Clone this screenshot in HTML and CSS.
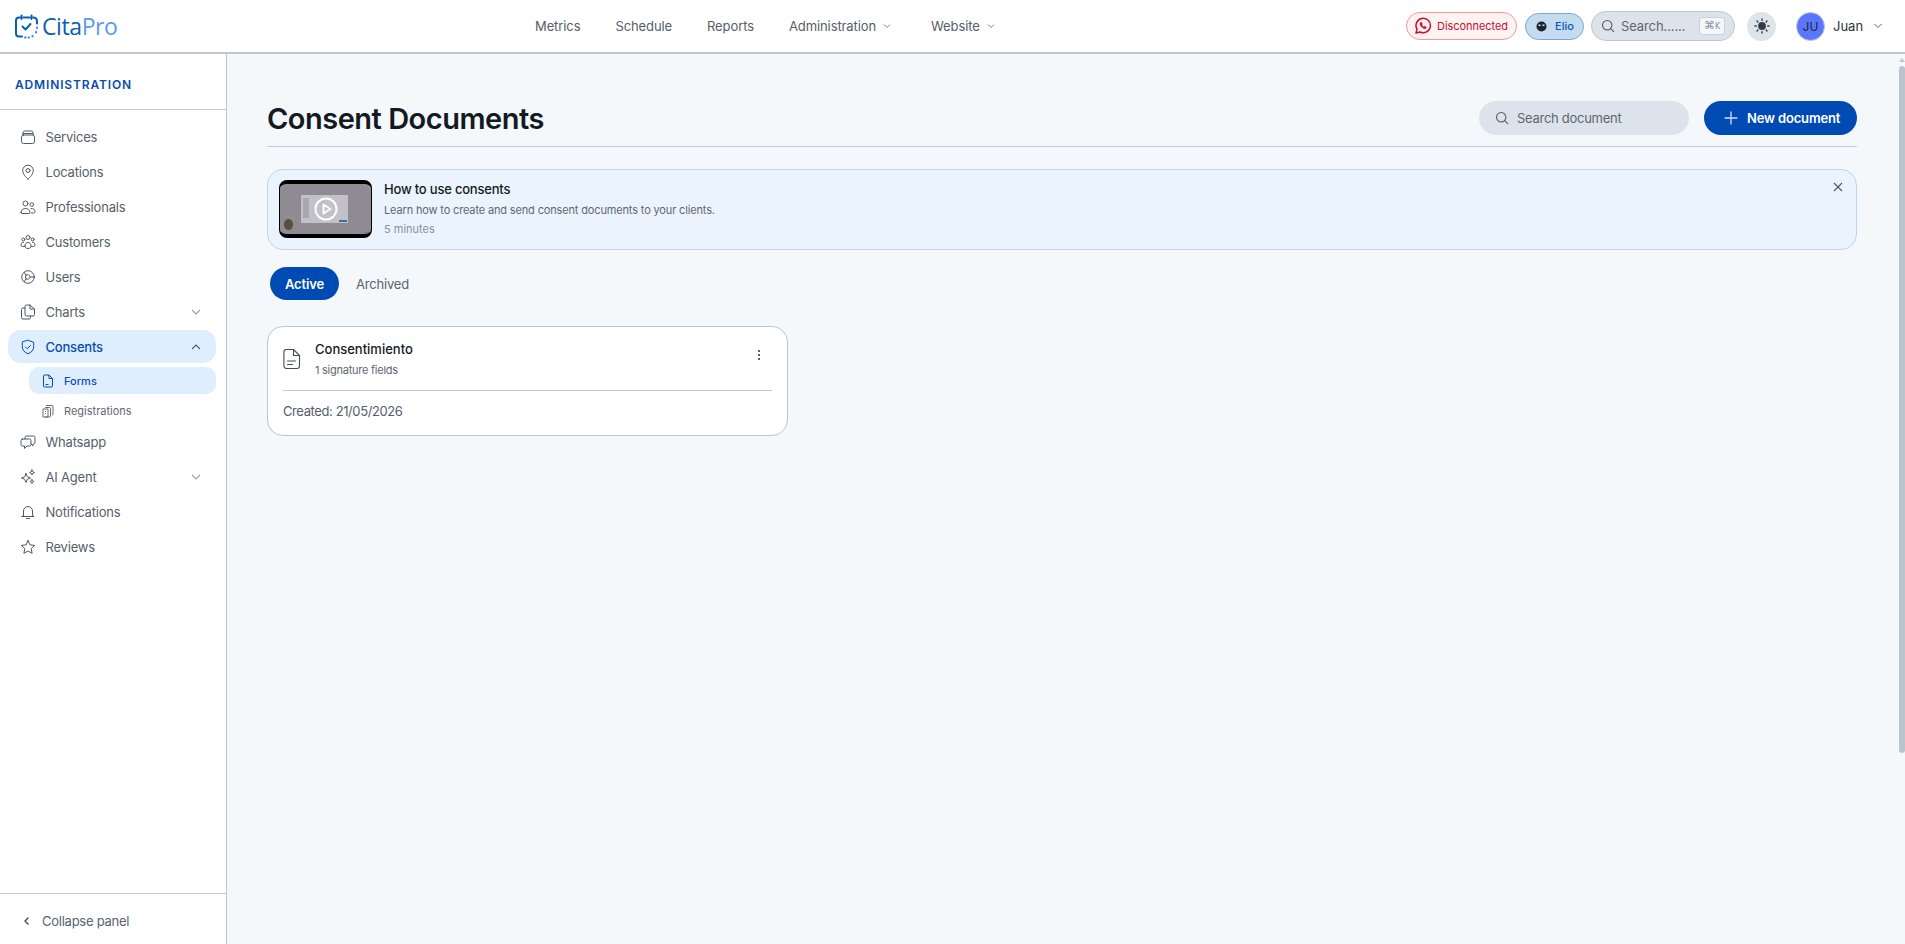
FILE: index.html
```html
<!DOCTYPE html>
<html>
<head>
    <meta charset="UTF-8">
    <title>Consent Documents</title>
    <link rel="stylesheet" href="styles.css">
</head>
<body>
    <header class="topbar">
        <a class="logo">
            <svg width="23" height="25" viewBox="0 0 23 25" fill="none" stroke="#0a5fb4" stroke-width="2" stroke-linecap="round" stroke-linejoin="round">
                <path d="M5 3.500H4a3 3 0 0 0-3 3v13a3 3 0 0 0 3 3h3"/>
                <path d="M6.500 1.500v3.500M16.500 1.500v3.500M8.500 3.500h6M18.500 3.500a3.500 3.500 0 0 1 3.500 3.500v2.500"/>
                <path d="M7.500 12.500l3 3 5-5.500"/>
                <path d="M22 13.500v.5M21 18v.5M17.500 22v.5M13.500 23.500h.5M10 23.500h.5" stroke="#2f86e6"/>
            </svg>
            <span class="logo-text">Cita<span class="logo-pro">Pro</span></span>
        </a>
        <nav class="topnav">
            <a>Metrics</a>
            <a>Schedule</a>
            <a>Reports</a>
            <a>Administration <svg class="chev-sm" viewBox="0 0 10 10"><path d="M2 3.500l3 3 3-3"/></svg></a>
            <a class="topnav-last">Website <svg class="chev-sm" viewBox="0 0 10 10"><path d="M2 3.500l3 3 3-3"/></svg></a>
        </nav>
        <div class="topright">
            <div class="pill-disconnected">
                <svg width="18" height="18" viewBox="0 0 18 18" fill="none" stroke="#c8102e" stroke-width="1.500" stroke-linejoin="round" stroke-linecap="round">
                    <path d="M2 16l1-3.800A7.200 7.200 0 1 1 6 15z"/>
                    <path d="M6.500 5.500c-.8.800-.8 2 .4 3.600s2.800 2.700 4.100 2.500c.9-.2 1.300-.8 1.300-1.400l-1.700-1-.8.700c-.9-.4-1.600-1.200-2-2l.6-.8-.9-1.700z" fill="#c8102e" stroke-width=".6"/>
                </svg>
                Disconnected
            </div>
            <div class="pill-agent">
                <svg width="11" height="11" viewBox="0 0 11 11"><circle cx="5.500" cy="5.500" r="5" fill="#1b2530"/><rect x="2.500" y="3.500" width="2" height="1.500" fill="#dfe6ec"/><rect x="6.500" y="3.500" width="2" height="1.500" fill="#dfe6ec"/></svg>
                <span>Elio</span>
            </div>
            <div class="top-search">
                <svg class="search-ico" width="14" height="14" viewBox="0 0 14 14"><circle cx="6.200" cy="6.200" r="4.700"/><path d="M9.700 9.700l3 3"/></svg>
                <span class="top-search-text">Search......</span>
                <kbd>⌘<span class="kbd-k">K</span></kbd>
            </div>
            <div class="theme-btn">
                <svg width="16" height="16" viewBox="0 0 16 16" fill="#333c47" stroke="#333c47" stroke-width="1.400" stroke-linecap="round"><circle cx="8" cy="8" r="3.200"/><path d="M8 1v1.200M8 13.800V15M1 8h1.200M13.800 8H15M3 3l.9.900M12.100 12.100l.9.900M3 13l.9-.900M12.100 3.900l.9-.900"/></svg>
            </div>
            <div class="user">
                <span class="avatar">JU</span>
                <span class="user-name">Juan</span>
                <svg class="chev-user" viewBox="0 0 10 10"><path d="M1.500 3l3.500 3.500L8.500 3"/></svg>
            </div>
        </div>
    </header>

    <div class="app">
        <aside class="sidebar">
            <div class="side-title">ADMINISTRATION</div>
            <ul class="side-list">
                <li class="side-item">
                    <svg class="ico" viewBox="0 0 16 16"><rect x="1.500" y="6" width="13" height="8.500" rx="2"/><path d="M3 6V3.500a1.500 1.500 0 0 1 1.500-1.500h7A1.500 1.500 0 0 1 13 3.500V6M3 4.500h10"/></svg>
                    Services
                </li>
                <li class="side-item">
                    <svg class="ico" viewBox="0 0 16 16"><path d="M8 15s5.300-3.800 5.300-8.500A5.300 5.300 0 0 0 2.700 6.500C2.700 11.200 8 15 8 15z"/><circle cx="8" cy="6.500" r="2"/></svg>
                    Locations
                </li>
                <li class="side-item">
                    <svg class="ico" viewBox="0 0 16 16"><circle cx="5.500" cy="4.500" r="2.500"/><circle cx="11.800" cy="5.500" r="1.800"/><path d="M1 13.500c0-2.500 2-4 4.500-4s4.500 1.500 4.500 4c0 .5-.3 1-1 1H2c-.7 0-1-.5-1-1z"/><path d="M11 9.500c2.300-.3 4 .9 4 3 0 1-.5 1.500-1.200 1.500H11.500"/></svg>
                    Professionals
                </li>
                <li class="side-item">
                    <svg class="ico" viewBox="0 0 16 16"><circle cx="8" cy="3.500" r="2"/><circle cx="3.300" cy="5.500" r="1.500"/><circle cx="12.700" cy="5.500" r="1.500"/><path d="M5 12c0-2.300 1.300-3.500 3-3.500s3 1.200 3 3.500c0 1.500-1 2.500-3 2.500s-3-1-3-2.500zM4.500 12.500h-2c-1 0-1.500-.7-1.500-1.500 0-1.500 1-2.800 2.500-2.800M11.500 12.500h2c1 0 1.500-.7 1.500-1.500 0-1.500-1-2.800-2.500-2.800"/></svg>
                    Customers
                </li>
                <li class="side-item">
                    <svg class="ico" viewBox="0 0 16 16"><circle cx="8" cy="8" r="6.300"/><path d="M4.500 3.500l1.500 2.700a2.800 2.800 0 0 1 4.300 1.800h3.900M4.500 12.500L6 9.800a2.800 2.800 0 0 0 4.300-1.800"/><path d="M6 6.200a2.800 2.800 0 0 0 0 3.600"/></svg>
                    Users
                </li>
                <li class="side-item">
                    <svg class="ico" viewBox="0 0 16 16"><path d="M5 4H3a1.500 1.500 0 0 0-1.500 1.500v8A1.500 1.500 0 0 0 3 15h6a1.500 1.500 0 0 0 1.500-1.500V12"/><path d="M5 2.500A1.500 1.500 0 0 1 6.500 1H10l4.500 4v5.500A1.500 1.500 0 0 1 13 12H6.500A1.500 1.500 0 0 1 5 10.500z"/><path d="M10 1v4h4.500"/></svg>
                    Charts
                    <svg class="chev" viewBox="0 0 12 12"><path d="M2 4l4 4 4-4"/></svg>
                </li>
                <li class="side-item side-item-active">
                    <svg class="ico" viewBox="0 0 16 16"><path d="M8 1.300l5.700 2v4.400c0 3.500-2.500 5.900-5.700 7-3.200-1.100-5.700-3.500-5.700-7V3.300z"/><path d="M5.500 8l1.800 1.800 3.200-3.400"/></svg>
                    Consents
                    <svg class="chev" viewBox="0 0 12 12"><path d="M2 8l4-4 4 4"/></svg>
                </li>
                <li class="side-sub side-sub-active">
                    <svg class="ico-sm" viewBox="0 0 14 14"><path d="M3.500 1h4.500l3.500 3.500V12a1 1 0 0 1-1 1h-7a1 1 0 0 1-1-1V2a1 1 0 0 1 1-1z"/><path d="M8 1v3.500h3.500M4.500 10.500h3"/></svg>
                    Forms
                </li>
                <li class="side-sub side-sub-last">
                    <svg class="ico-sm" viewBox="0 0 14 14"><path d="M5 1.500h6a1 1 0 0 1 1 1V10a1 1 0 0 1-1 1M4 3.500h4.500a1 1 0 0 1 1 1V12a1 1 0 0 1-1 1H4M2 5h5v8H2zM4 7.500h1M4 9.500h1"/></svg>
                    Registrations
                </li>
                <li class="side-item">
                    <svg class="ico" viewBox="0 0 16 16"><path d="M5 5V3.500A1.500 1.500 0 0 1 6.500 2h7A1.500 1.500 0 0 1 15 3.500v5a1.500 1.500 0 0 1-1.500 1.500H13v2l-2-2"/><path d="M2.500 5h7A1.500 1.500 0 0 1 11 6.500v4A1.500 1.500 0 0 1 9.500 12H7l-2.500 2.500V12h-2A1.500 1.500 0 0 1 1 10.500v-4A1.500 1.500 0 0 1 2.500 5z"/></svg>
                    Whatsapp
                </li>
                <li class="side-item">
                    <svg class="ico" viewBox="0 0 16 16"><path d="M6 4.500l1.300 3.200L10.500 9l-3.200 1.300L6 13.500l-1.300-3.200L1.500 9l3.200-1.300z"/><path d="M12 1l.8 1.700 1.700.8-1.700.8L12 6l-.8-1.700-1.700-.8 1.700-.8zM12 10.500l.7 1.300 1.300.7-1.300.7L12 14.500l-.7-1.300-1.300-.7 1.300-.7z"/></svg>
                    AI Agent
                    <svg class="chev" viewBox="0 0 12 12"><path d="M2 4l4 4 4-4"/></svg>
                </li>
                <li class="side-item">
                    <svg class="ico" viewBox="0 0 16 16"><path d="M3.500 11.500V7a4.500 4.500 0 0 1 9 0v4.500l1.500 1H2z"/><path d="M6.500 14.500h3"/></svg>
                    Notifications
                </li>
                <li class="side-item">
                    <svg class="ico" viewBox="0 0 16 16"><path d="M8 1.500l2 4.300 4.700.6-3.500 3.200.9 4.700L8 12l-4.100 2.300.9-4.700L1.300 6.400 6 5.800z"/></svg>
                    Reviews
                </li>
            </ul>
            <div class="collapse">
                <svg class="chev-left" viewBox="0 0 10 10"><path d="M6.500 1.500L3 5l3.500 3.500"/></svg>
                Collapse panel
            </div>
        </aside>

        <main class="content">
            <div class="page-head">
                <h1>Consent Documents</h1>
                <div class="page-actions">
                    <div class="doc-search">
                        <svg class="search-ico" width="14" height="14" viewBox="0 0 14 14"><circle cx="6.200" cy="6.200" r="4.700"/><path d="M9.700 9.700l3 3"/></svg>
                        Search document
                    </div>
                    <button class="btn-new">
                        <svg width="14" height="14" viewBox="0 0 14 14" stroke="#cfe0f7" stroke-width="1.300" stroke-linecap="round"><path d="M7 1v12M1 7h12"/></svg>
                        New document
                    </button>
                </div>
            </div>

            <section class="banner">
                <div class="thumb">
                    <div class="thumb-shot">
                        <span class="shot-side"></span>
                        <span class="shot-bar"></span>
                    </div>
                    <span class="thumb-person"></span>
                    <span class="thumb-corner"></span>
                    <svg class="thumb-play" width="24" height="24" viewBox="0 0 24 24" fill="none" stroke="#fff" stroke-width="2" stroke-linejoin="round"><circle cx="12" cy="12" r="10.500"/><path d="M9.500 7.500l7 4.500-7 4.500z"/></svg>
                </div>
                <div class="banner-text">
                    <div class="banner-title">How to use consents</div>
                    <div class="banner-desc">Learn how to create and send consent documents to your clients.</div>
                    <div class="banner-time">5 minutes</div>
                </div>
                <svg class="banner-close" width="10" height="10" viewBox="0 0 10 10"><path d="M1 1l8 8M9 1l-8 8"/></svg>
            </section>

            <div class="tabs">
                <span class="tab tab-active">Active</span>
                <span class="tab">Archived</span>
            </div>

            <article class="doc-card">
                <div class="doc-top">
                    <svg class="doc-ico" width="18" height="22" viewBox="0 0 18 22"><path d="M3 1.500h7.500l6 6V18a2.500 2.500 0 0 1-2.500 2.500H3A2.500 2.500 0 0 1 .9 18V4A2.500 2.500 0 0 1 3 1.500z"/><path d="M10.500 1.500v6h6M4.500 13h8M4.500 16.500h5"/></svg>
                    <div class="doc-info">
                        <div class="doc-name">Consentimiento</div>
                        <div class="doc-fields">1 signature fields</div>
                    </div>
                    <svg class="doc-menu" width="4" height="12" viewBox="0 0 4 12" fill="#333c47"><circle cx="2" cy="2" r="1.100"/><circle cx="2" cy="6" r="1.100"/><circle cx="2" cy="10" r="1.100"/></svg>
                </div>
                <div class="doc-created">Created: 21/05/2026</div>
            </article>
        </main>
    </div>

    <div class="scrollbar">
        <span class="scroll-up"></span>
        <span class="scroll-thumb"></span>
    </div>
</body>
</html>
```

FILE: styles.css
```css
* {
    box-sizing: border-box;
}
body {
    margin: 0;
    height: 944px;
    overflow: hidden;
    background-color: #f4f8fb;
    color: #111827;
    font-family: "Inter", "Noto Sans", sans-serif;
}
a {
    color: inherit;
}

/* top bar */
.topbar {
    display: flex;
    align-items: center;
    height: 54px;
    background-color: #fff;
    border-bottom: 2px solid #bfc8d1;
    position: relative;
    padding: 0 5px 0 15px;
}
.logo {
    display: flex;
    align-items: center;
    gap: 4px;
}
.logo-text {
    font-family: "Open Sans", sans-serif;
    font-size: 23px;
    letter-spacing: -0.4px;
    color: #0a5fb4;
}
.logo-pro {
    color: #5a9bee;
}
.topnav {
    position: absolute;
    left: 535px;
    top: 0;
    height: 52px;
    display: flex;
    align-items: center;
    gap: 35px;
    font-size: 13px;
    letter-spacing: -0.1px;
    color: #545e69;
}
.topnav a {
    display: flex;
    align-items: center;
    gap: 6px;
}
.topnav .topnav-last {
    margin-left: 4px;
}
.chev-sm {
    width: 10px;
    height: 10px;
    fill: none;
    stroke: #7b8590;
    stroke-width: 1;
}
.topright {
    margin-left: auto;
    display: flex;
    align-items: center;
    height: 52px;
}
.pill-disconnected {
    display: flex;
    align-items: center;
    gap: 5px;
    width: 111px;
    height: 28px;
    padding-left: 7px;
    margin-right: 8px;
    border: 1px solid #f09a9a;
    border-radius: 14px;
    background-color: #fff2f2;
    color: #c8102e;
    font-size: 11px;
    letter-spacing: -0.05px;
}
.pill-agent {
    display: flex;
    align-items: center;
    gap: 8px;
    width: 59px;
    height: 27px;
    padding-left: 10px;
    margin-right: 7px;
    border: 1px solid #7ba6cf;
    border-radius: 14px;
    background-color: #c4dcf0;
    color: #0c56b8;
    font-size: 11px;
    font-weight: 500;
}
.top-search {
    display: flex;
    align-items: center;
    width: 144px;
    height: 30px;
    padding: 0 9px;
    margin-right: 12px;
    border: 1px solid #bdc7d0;
    border-radius: 15px;
    background-color: #dce3ea;
    color: #5d6771;
    font-size: 13px;
    letter-spacing: -0.1px;
}
.search-ico {
    fill: none;
    stroke: #535d68;
    stroke-width: 1.100;
    stroke-linecap: round;
    flex-shrink: 0;
}
.top-search-text {
    margin-left: 6px;
}
kbd {
    margin-left: auto;
    width: 26px;
    height: 18px;
    border: 1px solid #c9d1d8;
    border-radius: 3px;
    background-color: #f4f6f8;
    color: #8a939c;
    font-family: "DejaVu Sans", sans-serif;
    font-size: 11px;
    line-height: 16px;
    text-align: center;
}
.kbd-k {
    font-size: 8px;
}
.theme-btn {
    display: flex;
    align-items: center;
    justify-content: center;
    width: 29px;
    height: 29px;
    margin-right: 20px;
    border-radius: 50%;
    background-color: #dde4ea;
}
.user {
    display: flex;
    align-items: center;
    width: 104px;
    font-size: 13px;
    color: #2c343d;
}
.avatar {
    display: flex;
    align-items: center;
    justify-content: center;
    width: 29px;
    height: 29px;
    border: 1px solid #c2c8d4;
    border-radius: 50%;
    background-color: #5a76fa;
    color: #1b2538;
    font-size: 12px;
}
.user-name {
    margin-left: 8px;
}
.chev-user {
    width: 10px;
    height: 10px;
    margin-left: 10px;
    fill: none;
    stroke: #5c6670;
    stroke-width: 1;
}

/* layout */
.app {
    display: flex;
    height: 890px;
}
.sidebar {
    width: 227px;
    flex-shrink: 0;
    display: flex;
    flex-direction: column;
    background-color: #fff;
    border-right: 1px solid #bcc6d0;
}
.side-title {
    height: 56px;
    padding: 23px 0 0 15px;
    border-bottom: 1px solid #c3cad3;
    color: #0a4cb0;
    font-size: 12px;
    font-weight: 600;
    letter-spacing: 0.85px;
}
.side-list {
    list-style: none;
    margin: 0;
    padding: 9px 0 0;
    flex: 1;
}
.side-item {
    display: flex;
    align-items: center;
    height: 35px;
    padding-left: 20px;
    color: #565f6a;
    font-size: 13px;
    letter-spacing: -0.2px;
}
.side-item-active {
    height: 33px;
    margin: 1px 10px 0 8px;
    padding-left: 12px;
    border-radius: 13px;
    background-color: #dfeefe;
    color: #0a4cb0;
    font-weight: 500;
}
.ico {
    width: 16px;
    height: 16px;
    margin-right: 9.500px;
    flex-shrink: 0;
    fill: none;
    stroke: #4f5964;
    stroke-width: 1;
    stroke-linejoin: round;
    stroke-linecap: round;
}
.side-item-active .ico {
    stroke: #0a4cb0;
}
.chev {
    width: 12px;
    height: 12px;
    margin-left: auto;
    margin-right: 24px;
    fill: none;
    stroke: #98a1aa;
    stroke-width: 1.100;
}
.side-item-active .chev {
    margin-right: 14px;
    stroke: #4f5964;
}
.side-sub {
    display: flex;
    align-items: center;
    height: 27px;
    margin: 4px 10px 3px 29px;
    padding-left: 12px;
    border-radius: 10px;
    color: #606973;
    font-size: 11px;
}
.side-sub-last {
    margin: 0 10px 0 29px;
}
.side-sub-active {
    background-color: #dfeefe;
    color: #0a4cb0;
    font-weight: 500;
}
.ico-sm {
    width: 14px;
    height: 14px;
    margin-right: 9px;
    fill: none;
    stroke: #666f79;
    stroke-width: 1;
    stroke-linejoin: round;
}
.side-sub-active .ico-sm {
    stroke: #0a4cb0;
}
.collapse {
    display: flex;
    align-items: center;
    height: 51px;
    padding: 4px 0 0 22px;
    border-top: 1px solid #c3cad3;
    color: #566371;
    font-size: 13px;
    letter-spacing: -0.25px;
}
.chev-left {
    width: 10px;
    height: 10px;
    margin-right: 10px;
    fill: none;
    stroke: #3e4852;
    stroke-width: 1.300;
}

/* main content */
.content {
    flex: 1;
    padding: 47px 48px 0 40px;
}
.page-head {
    display: flex;
    align-items: center;
    justify-content: space-between;
    height: 46px;
    padding-bottom: 11px;
    border-bottom: 1px solid #c3cad3;
}
h1 {
    margin: 0;
    font-family: "Inter", sans-serif;
    font-size: 29px;
    font-weight: 600;
    letter-spacing: -0.5px;
    color: #131a22;
}
.page-actions {
    display: flex;
    align-items: center;
    gap: 15px;
}
.doc-search {
    display: flex;
    align-items: center;
    gap: 8px;
    width: 210px;
    height: 34px;
    padding-left: 16px;
    border-radius: 17px;
    background-color: #dce3ea;
    color: #5d6771;
    font-size: 13px;
    letter-spacing: -0.28px;
}
.btn-new {
    display: flex;
    align-items: center;
    gap: 9px;
    width: 153px;
    height: 34px;
    padding: 0 0 0 20px;
    border: none;
    border-radius: 17px;
    background-color: #004ab3;
    color: #fff;
    font-family: inherit;
    font-size: 13px;
    font-weight: 600;
    letter-spacing: -0.15px;
}
.banner {
    display: flex;
    align-items: center;
    position: relative;
    height: 81px;
    margin-top: 22px;
    padding: 0 11px;
    border: 1px solid #bcd4ec;
    border-radius: 16px;
    background-color: #ebf4fe;
}
.thumb {
    position: relative;
    width: 93px;
    height: 58px;
    flex-shrink: 0;
    margin-bottom: 2px;
    overflow: hidden;
    border-top: 4px solid #000;
    border-bottom: 4px solid #000;
    border-left: 1px solid #000;
    border-right: 1px solid #000;
    border-radius: 8px;
    background-color: #8e8c92;
}
.thumb-shot {
    position: absolute;
    left: 21px;
    top: 11px;
    width: 47px;
    height: 28px;
    background-color: #c2c1c7;
}
.shot-side {
    position: absolute;
    left: 2px;
    top: 3px;
    width: 6px;
    height: 20px;
    background-color: #a8a7ad;
}
.shot-bar {
    position: absolute;
    right: 1px;
    bottom: 1px;
    width: 8px;
    height: 2px;
    background-color: #3d6ca8;
}
.thumb-person {
    position: absolute;
    left: 4px;
    bottom: 4px;
    width: 9px;
    height: 11px;
    border-radius: 50%;
    background-color: #5a4c3e;
}
.thumb-corner {
    position: absolute;
    right: 0;
    bottom: 0;
    width: 7px;
    height: 2px;
    background-color: #5f7fa8;
}
.thumb-play {
    position: absolute;
    left: 34px;
    top: 13px;
}
.banner-text {
    margin-left: 12px;
    margin-bottom: 2px;
}
.banner-title {
    font-size: 13px;
    font-weight: 500;
    letter-spacing: -0.2px;
    color: #131a22;
}
.banner-desc {
    margin-top: 6px;
    font-size: 11px;
    letter-spacing: -0.15px;
    color: #5e6873;
}
.banner-time {
    margin-top: 5px;
    font-size: 11px;
    color: #8a929b;
}
.banner-close {
    position: absolute;
    top: 12px;
    right: 13px;
    fill: none;
    stroke: #4f5964;
    stroke-width: 1.100;
}
.tabs {
    display: flex;
    align-items: center;
    gap: 17px;
    height: 33px;
    margin-top: 17px;
    padding-left: 3px;
    font-size: 13px;
    letter-spacing: -0.2px;
    color: #5a636d;
}
.tab-active {
    display: flex;
    align-items: center;
    height: 33px;
    padding: 0 15px;
    border-radius: 17px;
    background-color: #004ab3;
    color: #fff;
    font-weight: 600;
    letter-spacing: -0.15px;
}
.doc-card {
    width: 521px;
    height: 110px;
    margin-top: 26px;
    padding: 0 15px;
    border: 1px solid #bcc6d0;
    border-radius: 16px;
    background-color: #fff;
}
.doc-top {
    display: flex;
    align-items: center;
    height: 64px;
    border-bottom: 1px solid #c3cad3;
}
.doc-ico {
    fill: none;
    stroke: #434d58;
    stroke-width: 1.100;
    stroke-linejoin: round;
    stroke-linecap: round;
}
.doc-info {
    margin-left: 14px;
    flex: 1;
}
.doc-name {
    font-size: 13px;
    font-weight: 500;
    color: #131a22;
}
.doc-fields {
    margin-top: 6px;
    font-size: 11px;
    letter-spacing: -0.25px;
    color: #5e6873;
}
.doc-menu {
    margin-right: 11px;
    margin-bottom: 8px;
}
.doc-created {
    margin-top: 12px;
    font-size: 13px;
    letter-spacing: -0.4px;
    color: #545e69;
}

/* page scrollbar */
.scrollbar {
    position: absolute;
    right: 0;
    top: 54px;
    bottom: 0;
    width: 6px;
    background-color: #f4f8fb;
}
.scroll-up {
    display: block;
    width: 0;
    margin: 4px 0 0;
    border-left: 3px solid transparent;
    border-right: 3px solid transparent;
    border-bottom: 4px solid #bfc7ce;
}
.scroll-thumb {
    display: block;
    height: 687px;
    margin-top: 4px;
    border-radius: 3px;
    background-color: #bcc4cb;
}
```
